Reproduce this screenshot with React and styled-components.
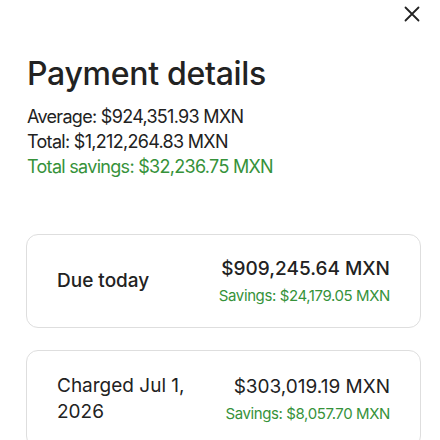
import React from "react";
import styled, { createGlobalStyle } from "styled-components";

const GlobalStyle = createGlobalStyle`
  body {
    margin: 0;
    background: #fff;
    font-family: Inter, "Noto Sans", sans-serif;
    color: #222;
  }
`;

function App() {
  return (
    <Wrapper>
      <GlobalStyle />
      <TopBar>
        <CloseButton aria-label="Close">
          <svg width="16" height="16" viewBox="0 0 16 16" fill="none">
            <path d="M1.5 1.5l13 13M14.5 1.5l-13 13" stroke="#222" strokeWidth="1.8" strokeLinecap="round" />
          </svg>
        </CloseButton>
      </TopBar>

      <Title>Payment details</Title>
      <Summary>
        <p>Average: $924,351.93 MXN</p>
        <p>Total: $1,212,264.83 MXN</p>
        <Saving>Total savings: $32,236.75 MXN</Saving>
      </Summary>

      <Cards>
        <Card>
          <Label $bold>Due today</Label>
          <Amounts>
            <Amount $bold>$909,245.64 MXN</Amount>
            <SmallSaving>Savings: $24,179.05 MXN</SmallSaving>
          </Amounts>
        </Card>
        <Card>
          <Label>Charged Jul 1, 2026</Label>
          <Amounts>
            <Amount>$303,019.19 MXN</Amount>
            <SmallSaving>Savings: $8,057.70 MXN</SmallSaving>
          </Amounts>
        </Card>
      </Cards>
    </Wrapper>
  );
}

const Wrapper = styled.div`
  padding: 0 19px 0 26px;
`;

const TopBar = styled.div`
  display: flex;
  justify-content: flex-end;
  padding-top: 6px;
`;

const CloseButton = styled.button`
  border: 0;
  background: none;
  padding: 0;
  width: 16px;
  height: 16px;
  margin-right: 1px;
  display: flex;
`;

const Title = styled.h1`
  margin: 33px 0 0 1px;
  font-size: 32px;
  line-height: 38px;
  font-weight: 500;
  letter-spacing: -0.3px;
`;

const Summary = styled.div`
  margin-top: 11px;
  padding-left: 1px;

  p {
    margin: 0;
    font-size: 18px;
    line-height: 25px;
    letter-spacing: -0.7px;
  }
`;

const Saving = styled.p`
  color: #36923a;
`;

const Cards = styled.div`
  margin-top: 55px;
  display: flex;
  flex-direction: column;
  gap: 22px;
`;

const Card = styled.div`
  border: 1px solid #dedede;
  border-radius: 12px;
  padding: 22px 30px;
  display: flex;
  align-items: center;
  justify-content: space-between;
  gap: 16px;
`;

const Label = styled.div`
  flex: 1;
  font-size: 19px;
  line-height: 26px;
  font-weight: ${(p) => (p.$bold ? 500 : 400)};
  max-width: 160px;
`;

const Amounts = styled.div`
  display: flex;
  flex-direction: column;
  align-items: flex-end;
  gap: 6px;
  white-space: nowrap;
`;

const Amount = styled.div`
  font-size: 19px;
  line-height: 24px;
  font-weight: ${(p) => (p.$bold ? 500 : 400)};
`;

const SmallSaving = styled.div`
  font-size: 15px;
  line-height: 18px;
  letter-spacing: -0.4px;
  color: #36923a;
`;

export default App;
